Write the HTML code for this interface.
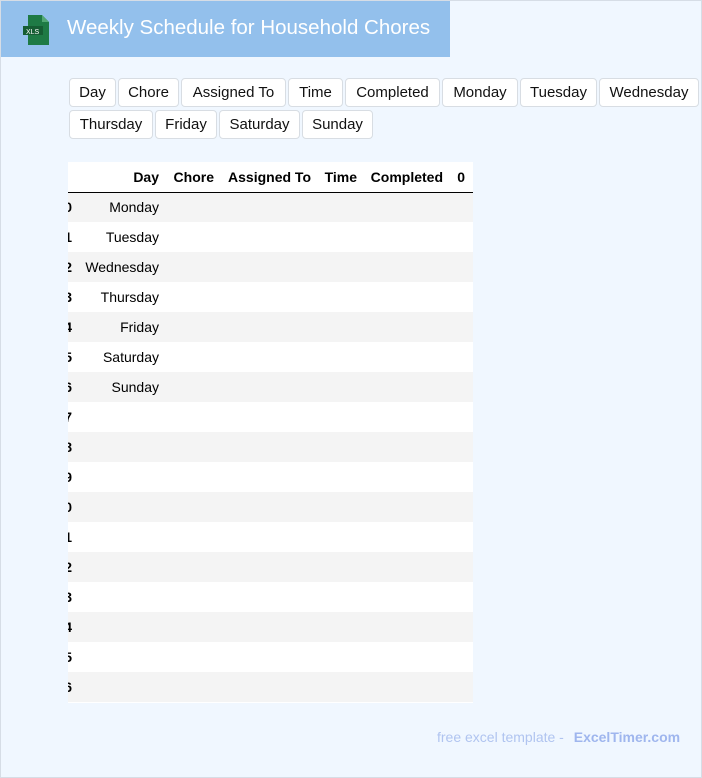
<!DOCTYPE html>
<html><head><style>
*{box-sizing:border-box;margin:0;padding:0}
body{width:702px;height:778px;background:#f0f7ff;font-family:"Liberation Sans",sans-serif;position:relative;overflow:hidden;border:1px solid #d6dde6}
.hdr{position:absolute;left:0;top:0;width:449px;height:56px;background:#93c0ec}
.hdr .t{position:absolute;left:66px;top:15px;color:#fff;font-size:20.5px;white-space:nowrap}
.btn{position:absolute;height:29px;background:#fff;border:1px solid #d8dde3;border-radius:4px;font-size:15px;line-height:27px;text-align:center;color:#111;white-space:nowrap}
.tw{position:absolute;left:67px;top:161px;width:405px;height:541px;overflow:hidden;background:#fff}
table{position:absolute;left:-14px;top:0;border-collapse:collapse;font-size:14px;table-layout:fixed;width:419px}
th{height:30px;font-weight:bold;text-align:right;border-bottom:1px solid #000;padding:0;background:#fff;white-space:nowrap}
td{height:30px;text-align:right;padding:0;white-space:nowrap}
tr:nth-child(even) td{background:#f4f4f4}
td.i{font-weight:bold}
.foot{position:absolute;left:436px;top:728px;font-size:14px;color:#b0c4f0}
.foot b{color:#9fb6ee;margin-left:6px}
</style></head><body>
<div class="hdr">
<svg style="position:absolute;left:22px;top:14px" width="28" height="30" viewBox="0 0 28 30"><path d="M5 0h14l7 7v23H5z" fill="#1e7a45"/><path d="M19 0v7h7z" fill="#52a874"/><rect x="0" y="11" width="20" height="9" fill="#155d33"/><text x="3" y="19" font-size="7" fill="#fff" font-family="Liberation Sans">XLS</text></svg>
<div class="t">Weekly Schedule for Household Chores</div></div>
<div class="btn" style="left:68px;top:77px;width:47px">Day</div>
<div class="btn" style="left:117px;top:77px;width:61px">Chore</div>
<div class="btn" style="left:180px;top:77px;width:105px">Assigned To</div>
<div class="btn" style="left:287px;top:77px;width:55px">Time</div>
<div class="btn" style="left:344px;top:77px;width:95px">Completed</div>
<div class="btn" style="left:441px;top:77px;width:76px">Monday</div>
<div class="btn" style="left:519px;top:77px;width:77px">Tuesday</div>
<div class="btn" style="left:598px;top:77px;width:100px">Wednesday</div>
<div class="btn" style="left:68px;top:109px;width:84px">Thursday</div>
<div class="btn" style="left:154px;top:109px;width:62px">Friday</div>
<div class="btn" style="left:218px;top:109px;width:81px">Saturday</div>
<div class="btn" style="left:301px;top:109px;width:71px">Sunday</div>
<div class="tw"><table>
<colgroup><col style="width:18px"><col style="width:87px"><col style="width:55px"><col style="width:97px"><col style="width:46px"><col style="width:86px"><col style="width:22px"><col style="width:8px"></colgroup>
<tr><th></th><th>Day</th><th>Chore</th><th>Assigned To</th><th>Time</th><th>Completed</th><th>0</th><th></th></tr>
<tr><td class="i">0</td><td>Monday</td><td></td><td></td><td></td><td></td><td></td><td></td></tr>
<tr><td class="i">1</td><td>Tuesday</td><td></td><td></td><td></td><td></td><td></td><td></td></tr>
<tr><td class="i">2</td><td>Wednesday</td><td></td><td></td><td></td><td></td><td></td><td></td></tr>
<tr><td class="i">3</td><td>Thursday</td><td></td><td></td><td></td><td></td><td></td><td></td></tr>
<tr><td class="i">4</td><td>Friday</td><td></td><td></td><td></td><td></td><td></td><td></td></tr>
<tr><td class="i">5</td><td>Saturday</td><td></td><td></td><td></td><td></td><td></td><td></td></tr>
<tr><td class="i">6</td><td>Sunday</td><td></td><td></td><td></td><td></td><td></td><td></td></tr>
<tr><td class="i">7</td><td></td><td></td><td></td><td></td><td></td><td></td><td></td></tr>
<tr><td class="i">8</td><td></td><td></td><td></td><td></td><td></td><td></td><td></td></tr>
<tr><td class="i">9</td><td></td><td></td><td></td><td></td><td></td><td></td><td></td></tr>
<tr><td class="i">0</td><td></td><td></td><td></td><td></td><td></td><td></td><td></td></tr>
<tr><td class="i">1</td><td></td><td></td><td></td><td></td><td></td><td></td><td></td></tr>
<tr><td class="i">2</td><td></td><td></td><td></td><td></td><td></td><td></td><td></td></tr>
<tr><td class="i">3</td><td></td><td></td><td></td><td></td><td></td><td></td><td></td></tr>
<tr><td class="i">4</td><td></td><td></td><td></td><td></td><td></td><td></td><td></td></tr>
<tr><td class="i">5</td><td></td><td></td><td></td><td></td><td></td><td></td><td></td></tr>
<tr><td class="i">6</td><td></td><td></td><td></td><td></td><td></td><td></td><td></td></tr>
</table></div>
<div class="foot">free excel template - <b>ExcelTimer.com</b></div>
</body></html>
